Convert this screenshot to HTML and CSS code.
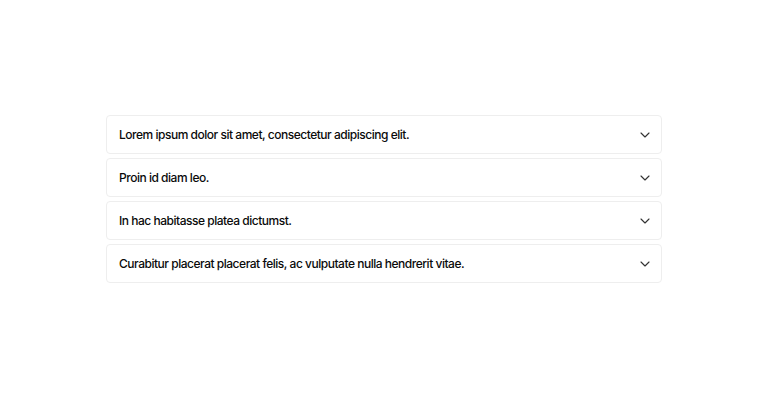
FILE: index.html
```html
<!DOCTYPE html>
<html>
<head>
<meta charset="utf-8">
<link rel="stylesheet" href="styles.css">
</head>
<body>
<div class="page">
  <div class="accordion">
    <div class="item"><span class="q">Lorem ipsum dolor sit amet, consectetur adipiscing elit.</span><svg class="chev" viewBox="0 0 24 24"><path d="M6 9l6 6 6-6"/></svg></div>
    <div class="item"><span class="q">Proin id diam leo.</span><svg class="chev" viewBox="0 0 24 24"><path d="M6 9l6 6 6-6"/></svg></div>
    <div class="item"><span class="q">In hac habitasse platea dictumst.</span><svg class="chev" viewBox="0 0 24 24"><path d="M6 9l6 6 6-6"/></svg></div>
    <div class="item"><span class="q">Curabitur placerat placerat felis, ac vulputate nulla hendrerit vitae.</span><svg class="chev" viewBox="0 0 24 24"><path d="M6 9l6 6 6-6"/></svg></div>
  </div>
</div>
</body>
</html>
```
FILE: styles.css
```css
html, body { margin: 0; padding: 0; background: #fff; }
body { font-family: Inter, "Noto Sans", sans-serif; color: #0a0a0a; }
.page { width: 768px; height: 400px; display: flex; justify-content: center; padding-top: 115px; box-sizing: border-box; }
.accordion { width: 556px; display: flex; flex-direction: column; gap: 4px; }
.item { display: flex; align-items: center; justify-content: space-between; border: 1px solid #eeeeee; border-radius: 4px; padding: 0 8px 0 12px; height: 39px; box-sizing: border-box; }
.q { font-size: 12px; font-weight: 500; letter-spacing: -0.48px; }
.chev { width: 16px; height: 16px; fill: none; stroke: #333; stroke-width: 1.7; stroke-linecap: round; stroke-linejoin: round; }
```
